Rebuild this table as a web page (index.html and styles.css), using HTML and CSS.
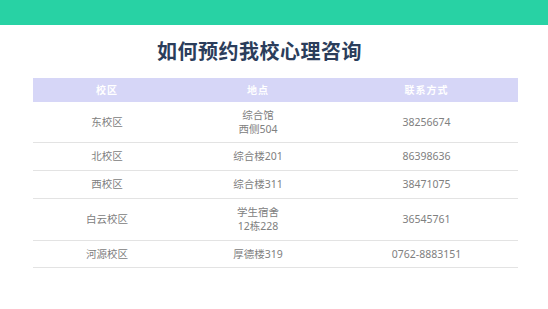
FILE: index.html
```html
<!DOCTYPE html>
<html lang="zh">
<head>
<meta charset="utf-8">
<link rel="stylesheet" href="styles.css">
</head>
<body>
<div class="topbar"></div>
<h1 class="title">如何预约我校心理咨询</h1>
<table class="info">
  <colgroup>
    <col class="c1"><col class="c2"><col class="c3">
  </colgroup>
  <thead>
    <tr><th>校区</th><th>地点</th><th>联系方式</th></tr>
  </thead>
  <tbody>
    <tr><td>东校区</td><td>综合馆<br>西侧504</td><td>38256674</td></tr>
    <tr><td>北校区</td><td>综合楼201</td><td>86398636</td></tr>
    <tr><td>西校区</td><td>综合楼311</td><td>38471075</td></tr>
    <tr><td>白云校区</td><td>学生宿舍<br>12栋228</td><td>36545761</td></tr>
    <tr><td>河源校区</td><td>厚德楼319</td><td>0762-8883151</td></tr>
  </tbody>
</table>
</body>
</html>
```
FILE: styles.css
```css
html, body {
  margin: 0;
  padding: 0;
  background: #ffffff;
  font-family: "Noto Sans", "Noto Sans CJK SC", sans-serif;
}
.topbar {
  height: 25px;
  background: #28d2a4;
}
.title {
  margin: 0;
  padding: 13px 0 0 157px;
  height: 40px;
  font-size: 20px;
  line-height: 26px;
  letter-spacing: 0.5px;
  font-weight: 700;
  color: #2b3d5b;
  font-family: "Noto Sans CJK SC", sans-serif;
}
.info {
  margin-left: 33px;
  width: 485px;
  border-collapse: collapse;
  table-layout: fixed;
}
.c1 { width: 148px; }
.c2 { width: 154px; }
.c3 { width: 183px; }
.info th {
  background: #d6d6f7;
  color: #ffffff;
  font-size: 10px;
  font-weight: 700;
  height: 24px;
  padding: 0;
  line-height: 14px;
  font-family: "Noto Sans CJK SC", sans-serif;
  letter-spacing: 1px;
}
.info td {
  text-align: center;
  color: #808080;
  font-size: 10.5px;
  line-height: 14px;
  padding: 6px 0 7px;
  border-bottom: 1px solid #e3e3e3;
}
.info tbody tr:first-child td,
.info tbody tr:last-child td {
  padding-bottom: 6px;
}
```
